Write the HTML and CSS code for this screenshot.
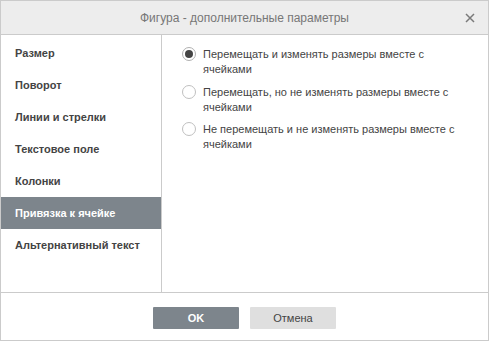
FILE: index.html
```html
<!DOCTYPE html>
<html lang="ru">
<head>
    <meta charset="UTF-8">
    <title>Фигура - дополнительные параметры</title>
    <link rel="stylesheet" href="styles.css">
</head>
<body>
    <div class="dialog">
        <div class="header">
            <span class="title">Фигура - дополнительные параметры</span>
            <span class="close">
                <svg width="10" height="10" viewBox="0 0 10 10"><path d="M1 1L9 9M9 1L1 9" stroke="#7a7a7a" stroke-width="1.5" fill="none"/></svg>
            </span>
        </div>
        <div class="body">
            <div class="menu">
                <div class="item">Размер</div>
                <div class="item">Поворот</div>
                <div class="item">Линии и стрелки</div>
                <div class="item">Текстовое поле</div>
                <div class="item">Колонки</div>
                <div class="item active">Привязка к ячейке</div>
                <div class="item">Альтернативный текст</div>
            </div>
            <div class="content">
                <label class="option">
                    <span class="radio checked"></span>
                    <span class="text">Перемещать и изменять размеры вместе с ячейками</span>
                </label>
                <label class="option">
                    <span class="radio"></span>
                    <span class="text">Перемещать, но не изменять размеры вместе с ячейками</span>
                </label>
                <label class="option">
                    <span class="radio"></span>
                    <span class="text">Не перемещать и не изменять размеры вместе с ячейками</span>
                </label>
            </div>
        </div>
        <div class="footer">
            <button class="btn primary">OK</button>
            <button class="btn">Отмена</button>
        </div>
    </div>
</body>
</html>
```

FILE: styles.css
```css
body { margin: 0; font-family: "Liberation Sans", Arial, sans-serif; font-size: 11px; color: #444; background: #fff; }
.dialog { width: 487px; height: 339px; border: 1px solid #cbcbcb; display: flex; flex-direction: column; background: #fff; }
.header { height: 33px; background: #ededed; border-bottom: 1px solid #cbcbcb; display: flex; align-items: center; justify-content: center; position: relative; }
.title { font-size: 12px; color: #777; }
.close { position: absolute; right: 13px; top: 12px; width: 10px; height: 10px; display: flex; }
.body { flex: 1; display: flex; border-bottom: 1px solid #cbcbcb; }
.menu { width: 160px; border-right: 1px solid #cbcbcb; padding-top: 2px; }
.item { height: 32px; line-height: 32px; padding-left: 14px; font-weight: bold; color: #444; }
.item.active { background: #7d858c; color: #fff; }
.content { flex: 1; padding: 12px 20px 0 20px; display: flex; flex-direction: column; gap: 7.5px; }
.option { display: flex; align-items: flex-start; gap: 7px; line-height: 15px; }
.radio { width: 12px; height: 12px; border: 1px solid #c0c0c0; border-radius: 50%; flex: none; margin-top: 0; display: flex; align-items: center; justify-content: center; box-sizing: content-box; }
.radio.checked { border-color: #b0b0b0; }
.radio.checked::after { content: ""; width: 8px; height: 8px; border-radius: 50%; background: #444; }
.text { flex: 1; }
.footer { height: 47px; display: flex; justify-content: center; align-items: flex-start; padding-top: 14px; box-sizing: border-box; gap: 11px; }
.btn { width: 86px; height: 22px; border: none; border-radius: 1px; background: #dfdfdf; color: #444; font-family: "Liberation Sans", Arial, sans-serif; font-size: 11px; padding: 0; }
.btn.primary { background: #7d858c; color: #fff; font-weight: bold; }
```
